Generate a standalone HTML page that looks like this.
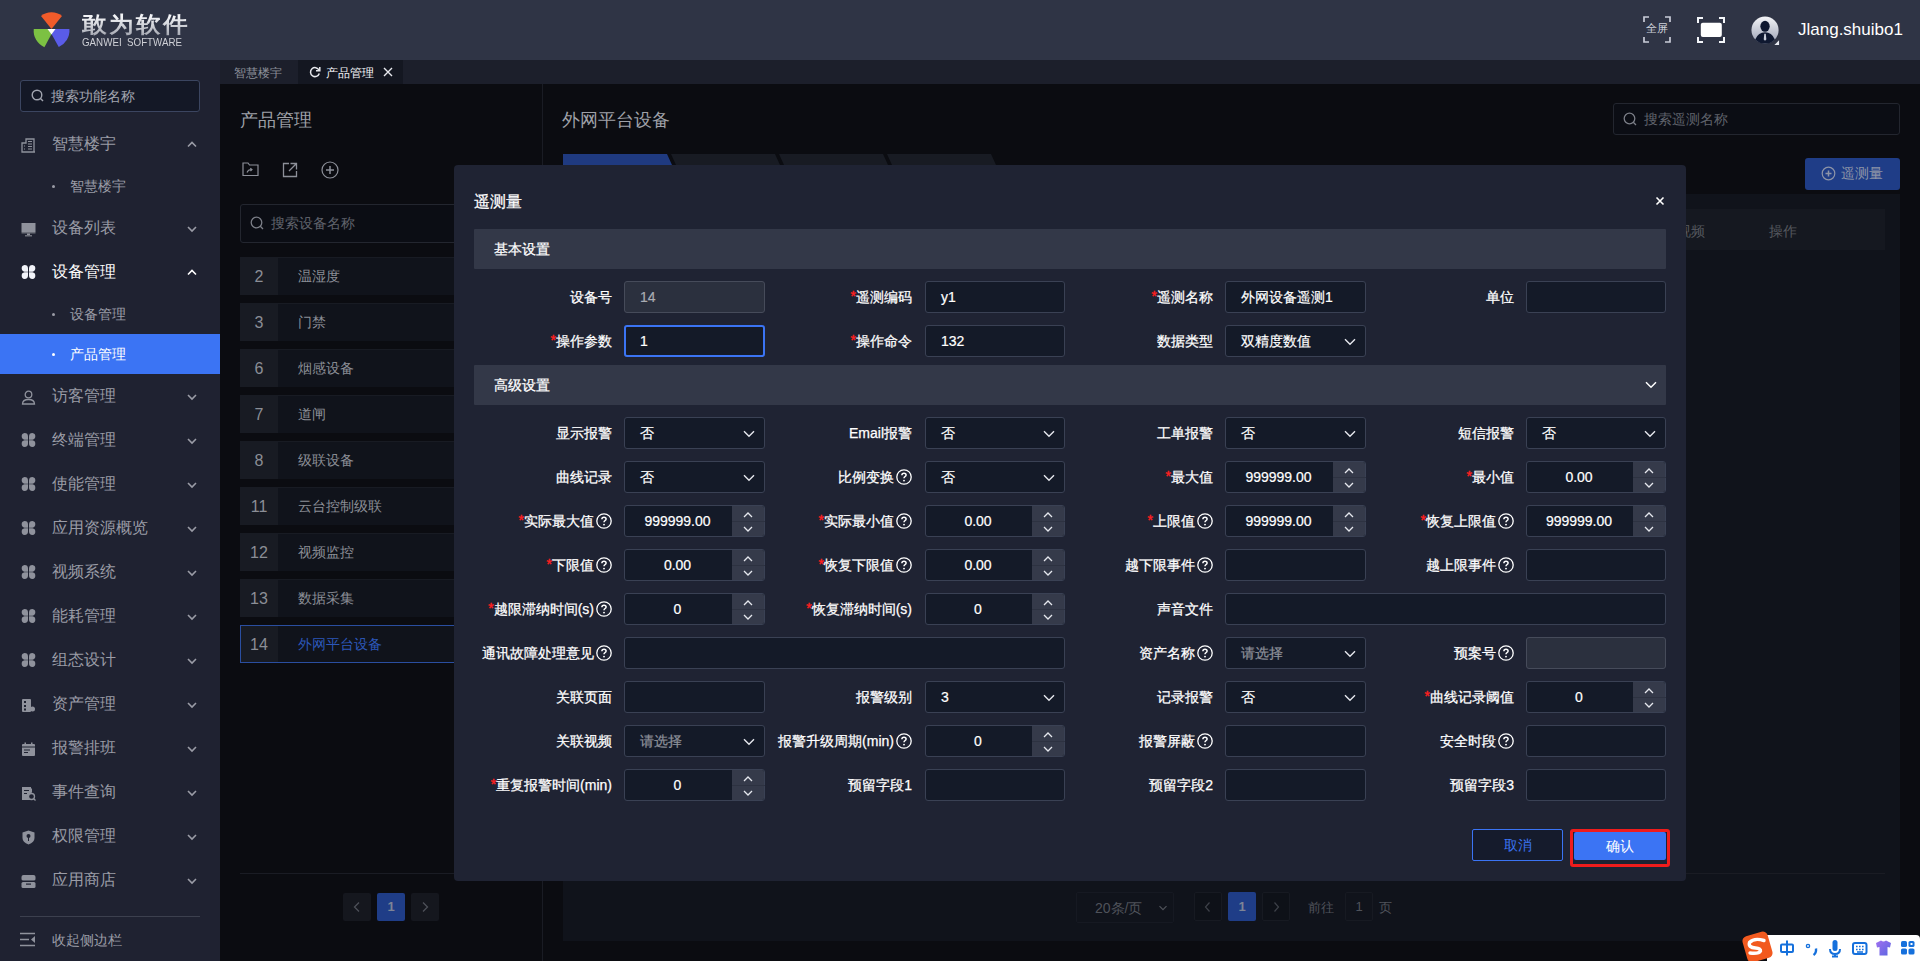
<!DOCTYPE html><html><head><meta charset="utf-8"><style>
*{box-sizing:border-box;margin:0;padding:0}
html,body{width:1920px;height:961px;overflow:hidden;background:#0b0c11;font-family:"Liberation Sans",sans-serif;color:#fff}
.a{position:absolute}
svg{display:block}
#hdr{position:absolute;left:0;top:0;width:1920px;height:60px;background:#2f3445}
#side{position:absolute;left:0;top:60px;width:220px;height:901px;background:#1f2231}
#tabs{position:absolute;left:220px;top:60px;width:1700px;height:24px;background:#1c1f2b}
#content{position:absolute;left:220px;top:84px;width:1700px;height:877px;background:#0b0c11}
.mi{position:absolute;left:0;width:220px;height:44px;color:#9a9ca6;font-size:16px}
.mi .t{position:absolute;left:52px;top:12px;line-height:20px;white-space:nowrap}
.mi .ic{position:absolute;left:21px;top:15px}
.mi .ch{position:absolute;left:187px;top:18px}
.si{position:absolute;left:0;width:220px;height:40px;color:#9a9ca6;font-size:14px}
.si .t{position:absolute;left:70px;top:12px;line-height:16px}
.si .dot{position:absolute;left:52px;top:19px;width:3px;height:3px;border-radius:50%;background:#9a9ca6}

.lb{position:absolute;height:20px;line-height:20px;font-size:14px;color:#fff;white-space:nowrap;text-align:right;-webkit-text-stroke:0.25px #fff}
.lb .st{color:#ff1f1f;position:relative;top:-1px;-webkit-text-stroke:0.4px #ff1f1f}
.qm{display:inline-block;vertical-align:top;margin-top:2px;margin-left:2px;width:16px;height:16px}
.inp{position:absolute;height:32px;border:1px solid #3a4154;border-radius:3px;background:#141a28;font-size:14px;color:#fff;line-height:30px;padding-left:15px;white-space:nowrap;-webkit-text-stroke:0.2px currentColor}
.sp{position:absolute;top:0;right:0;width:32px;height:30px;background:#353a4a;border-radius:0 2px 2px 0}
</style></head><body>
<div id="hdr">
<svg class="a" style="left:0;top:0" width="80" height="60" viewBox="0 0 80 60">
<path d="M51.5 29 L41 16 A16.5 16.5 0 0 1 62 16 Z" fill="#f05b2a"/>
<path d="M48 29 L33.75 29 A18 18 0 0 0 44.4 47.25 L51.5 34 Z" fill="#7cc143"/>
<path d="M55 29 L69.4 29 A18 18 0 0 1 58.75 46.9 L51.5 34 Z" fill="#5a5ce8"/>
<path d="M47.5 29 L55.5 29 L51.5 34.5 Z" fill="#fff"/>
</svg>
<div class="a" style="left:82px;top:12px;font-size:21.5px;font-weight:bold;color:transparent;background:linear-gradient(180deg,#f2f3f6 20%,#a6a9b3 90%);-webkit-background-clip:text;background-clip:text;letter-spacing:2px;line-height:26px;transform:scaleX(1.12);transform-origin:0 0;white-space:nowrap">敢为软件</div>
<div class="a" style="left:82px;top:37px;font-size:10.5px;color:#cfd0d6;letter-spacing:0px;line-height:10px;white-space:nowrap;transform:scaleX(0.93);transform-origin:0 0">GANWEI&nbsp;&nbsp;SOFTWARE</div>
<svg class="a" style="left:1643px;top:16px" width="28" height="27" viewBox="0 0 28 27">
<path d="M1 6 V1 H6 M22 1 H27 V6 M27 21 V26 H22 M6 26 H1 V21" fill="none" stroke="#c9ccd8" stroke-width="1.7"/>
</svg>
<div class="a" style="left:1646px;top:20px;font-size:11px;color:#d0d3dc;line-height:16px">全屏</div>
<svg class="a" style="left:1697px;top:17px" width="28" height="27" viewBox="0 0 28 27">
<path d="M1 6 V1 H6 M22 1 H27 V6 M27 20 V25 H22 M6 25 H1 V20" fill="none" stroke="#f4f6fa" stroke-width="2"/>
<rect x="3.8" y="5.8" width="21" height="14.2" rx="2" fill="#fff"/>
</svg>
<svg class="a" style="left:1751px;top:16px" width="29" height="29" viewBox="0 0 31 31">
<defs><linearGradient id="av" x1="0" y1="0" x2="0" y2="1"><stop offset="0" stop-color="#f4f5f8"/><stop offset="1" stop-color="#9aa0b4"/></linearGradient></defs>
<circle cx="15" cy="15" r="14.5" fill="url(#av)"/>
<ellipse cx="15" cy="11" rx="5" ry="5.8" fill="#0f1830"/>
<path d="M4.5 25 Q8 17.5 15 17.5 Q22 17.5 25.5 25 A14.5 14.5 0 0 1 4.5 25 Z" fill="#0f1830"/>
<path d="M14.2 19 h1.6 l0.6 6 l-1.4 1.4 l-1.4 -1.4z" fill="#c9ceda"/>
<path d="M30 26 L30 31 L25 31 Z" fill="#e8eaf0"/>
</svg>
<div class="a" style="left:1798px;top:20px;font-size:17px;color:#fff;line-height:20px;white-space:nowrap">Jlang.shuibo1</div>
</div>
<div id="side">
<div class="a" style="left:20px;top:20px;width:180px;height:32px;border:1px solid #3b4560;border-radius:3px;background:#141826"></div>
<svg class="a" style="left:31px;top:29px" width="14" height="14" viewBox="0 0 14 14"><circle cx="6" cy="6" r="4.8" fill="none" stroke="#a2a5b0" stroke-width="1.4"/><path d="M9.5 9.5 L12 12" stroke="#a2a5b0" stroke-width="1.4"/></svg>
<div class="a" style="left:51px;top:27px;font-size:14px;color:#a2a5b0;line-height:18px">搜索功能名称</div>
<div class="mi" style="top:62px;color:#9a9ca6"><svg class="ic" style="top:16px" width="15" height="15" viewBox="0 0 15 15"><path d="M1 14 V5 H5 V1 H13 V14 Z M1 14 H14" fill="none" stroke="#8f929c" stroke-width="1.3"/><path d="M7 3.5h4M7 6h4M7 8.5h4M7 11h4M3 8h1M3 11h1" stroke="#8f929c" stroke-width="1.2"/></svg><div class="t">智慧楼宇</div><svg class="ch" width="10" height="10" viewBox="0 0 10 10"><path d="M1 6.5 L5 2.5 L9 6.5" fill="none" stroke="#9a9ca6" stroke-width="1.6"/></svg></div>
<div class="si" style="top:106px"><div class="dot"></div><div class="t">智慧楼宇</div></div>
<div class="mi" style="top:146px;color:#9a9ca6"><svg class="ic" style="top:16px" width="15" height="15" viewBox="0 0 15 15"><rect x="0.5" y="1" width="14" height="9" fill="#8f929c"/><rect x="0.5" y="10" width="14" height="1.5" fill="#6d707a"/><rect x="6" y="11.5" width="3" height="1.5" fill="#8f929c"/><rect x="4" y="13" width="7" height="1.5" fill="#6d707a"/></svg><div class="t">设备列表</div><svg class="ch" width="10" height="10" viewBox="0 0 10 10"><path d="M1 3 L5 7 L9 3" fill="none" stroke="#9a9ca6" stroke-width="1.6"/></svg></div>
<div class="mi" style="top:190px;color:#fff"><svg class="ic" width="15" height="14" viewBox="0 0 15 14"><path d="M7 6.7 H3.5 A3.4 3.4 0 0 1 3.5 0 A3.5 3.4 0 0 1 7 3.4 Z M8 6.7 H11.5 A3.4 3.4 0 0 0 11.5 0 A3.5 3.4 0 0 0 8 3.4 Z M7 7.3 H3.5 A3.4 3.4 0 0 0 3.5 14 A3.5 3.4 0 0 0 7 10.6 Z M8 7.3 H11.5 A3.4 3.4 0 0 1 11.5 14 A3.5 3.4 0 0 1 8 10.6 Z" fill="#f2f4fa"/></svg><div class="t">设备管理</div><svg class="ch" width="10" height="10" viewBox="0 0 10 10"><path d="M1 6.5 L5 2.5 L9 6.5" fill="none" stroke="#fff" stroke-width="1.6"/></svg></div>
<div class="si" style="top:234px"><div class="dot"></div><div class="t">设备管理</div></div>
<div class="si" style="top:274px;background:#3b74f4;color:#fff"><div class="dot" style="background:#fff"></div><div class="t">产品管理</div></div>
<div class="mi" style="top:314px;color:#9a9ca6"><svg class="ic" style="top:16px" width="15" height="15" viewBox="0 0 15 15"><circle cx="7.5" cy="4.5" r="3.3" fill="none" stroke="#8f929c" stroke-width="1.3"/><path d="M1.5 14 Q1.5 9.5 7.5 9.5 Q13.5 9.5 13.5 14 Z" fill="none" stroke="#8f929c" stroke-width="1.3"/></svg><div class="t">访客管理</div><svg class="ch" width="10" height="10" viewBox="0 0 10 10"><path d="M1 3 L5 7 L9 3" fill="none" stroke="#9a9ca6" stroke-width="1.6"/></svg></div>
<div class="mi" style="top:358px;color:#9a9ca6"><svg class="ic" width="15" height="14" viewBox="0 0 15 14"><path d="M7 6.7 H3.5 A3.4 3.4 0 0 1 3.5 0 A3.5 3.4 0 0 1 7 3.4 Z M8 6.7 H11.5 A3.4 3.4 0 0 0 11.5 0 A3.5 3.4 0 0 0 8 3.4 Z M7 7.3 H3.5 A3.4 3.4 0 0 0 3.5 14 A3.5 3.4 0 0 0 7 10.6 Z M8 7.3 H11.5 A3.4 3.4 0 0 1 11.5 14 A3.5 3.4 0 0 1 8 10.6 Z" fill="#8f929c"/></svg><div class="t">终端管理</div><svg class="ch" width="10" height="10" viewBox="0 0 10 10"><path d="M1 3 L5 7 L9 3" fill="none" stroke="#9a9ca6" stroke-width="1.6"/></svg></div>
<div class="mi" style="top:402px;color:#9a9ca6"><svg class="ic" width="15" height="14" viewBox="0 0 15 14"><path d="M7 6.7 H3.5 A3.4 3.4 0 0 1 3.5 0 A3.5 3.4 0 0 1 7 3.4 Z M8 6.7 H11.5 A3.4 3.4 0 0 0 11.5 0 A3.5 3.4 0 0 0 8 3.4 Z M7 7.3 H3.5 A3.4 3.4 0 0 0 3.5 14 A3.5 3.4 0 0 0 7 10.6 Z M8 7.3 H11.5 A3.4 3.4 0 0 1 11.5 14 A3.5 3.4 0 0 1 8 10.6 Z" fill="#8f929c"/></svg><div class="t">使能管理</div><svg class="ch" width="10" height="10" viewBox="0 0 10 10"><path d="M1 3 L5 7 L9 3" fill="none" stroke="#9a9ca6" stroke-width="1.6"/></svg></div>
<div class="mi" style="top:446px;color:#9a9ca6"><svg class="ic" width="15" height="14" viewBox="0 0 15 14"><path d="M7 6.7 H3.5 A3.4 3.4 0 0 1 3.5 0 A3.5 3.4 0 0 1 7 3.4 Z M8 6.7 H11.5 A3.4 3.4 0 0 0 11.5 0 A3.5 3.4 0 0 0 8 3.4 Z M7 7.3 H3.5 A3.4 3.4 0 0 0 3.5 14 A3.5 3.4 0 0 0 7 10.6 Z M8 7.3 H11.5 A3.4 3.4 0 0 1 11.5 14 A3.5 3.4 0 0 1 8 10.6 Z" fill="#8f929c"/></svg><div class="t">应用资源概览</div><svg class="ch" width="10" height="10" viewBox="0 0 10 10"><path d="M1 3 L5 7 L9 3" fill="none" stroke="#9a9ca6" stroke-width="1.6"/></svg></div>
<div class="mi" style="top:490px;color:#9a9ca6"><svg class="ic" width="15" height="14" viewBox="0 0 15 14"><path d="M7 6.7 H3.5 A3.4 3.4 0 0 1 3.5 0 A3.5 3.4 0 0 1 7 3.4 Z M8 6.7 H11.5 A3.4 3.4 0 0 0 11.5 0 A3.5 3.4 0 0 0 8 3.4 Z M7 7.3 H3.5 A3.4 3.4 0 0 0 3.5 14 A3.5 3.4 0 0 0 7 10.6 Z M8 7.3 H11.5 A3.4 3.4 0 0 1 11.5 14 A3.5 3.4 0 0 1 8 10.6 Z" fill="#8f929c"/></svg><div class="t">视频系统</div><svg class="ch" width="10" height="10" viewBox="0 0 10 10"><path d="M1 3 L5 7 L9 3" fill="none" stroke="#9a9ca6" stroke-width="1.6"/></svg></div>
<div class="mi" style="top:534px;color:#9a9ca6"><svg class="ic" width="15" height="14" viewBox="0 0 15 14"><path d="M7 6.7 H3.5 A3.4 3.4 0 0 1 3.5 0 A3.5 3.4 0 0 1 7 3.4 Z M8 6.7 H11.5 A3.4 3.4 0 0 0 11.5 0 A3.5 3.4 0 0 0 8 3.4 Z M7 7.3 H3.5 A3.4 3.4 0 0 0 3.5 14 A3.5 3.4 0 0 0 7 10.6 Z M8 7.3 H11.5 A3.4 3.4 0 0 1 11.5 14 A3.5 3.4 0 0 1 8 10.6 Z" fill="#8f929c"/></svg><div class="t">能耗管理</div><svg class="ch" width="10" height="10" viewBox="0 0 10 10"><path d="M1 3 L5 7 L9 3" fill="none" stroke="#9a9ca6" stroke-width="1.6"/></svg></div>
<div class="mi" style="top:578px;color:#9a9ca6"><svg class="ic" width="15" height="14" viewBox="0 0 15 14"><path d="M7 6.7 H3.5 A3.4 3.4 0 0 1 3.5 0 A3.5 3.4 0 0 1 7 3.4 Z M8 6.7 H11.5 A3.4 3.4 0 0 0 11.5 0 A3.5 3.4 0 0 0 8 3.4 Z M7 7.3 H3.5 A3.4 3.4 0 0 0 3.5 14 A3.5 3.4 0 0 0 7 10.6 Z M8 7.3 H11.5 A3.4 3.4 0 0 1 11.5 14 A3.5 3.4 0 0 1 8 10.6 Z" fill="#8f929c"/></svg><div class="t">组态设计</div><svg class="ch" width="10" height="10" viewBox="0 0 10 10"><path d="M1 3 L5 7 L9 3" fill="none" stroke="#9a9ca6" stroke-width="1.6"/></svg></div>
<div class="mi" style="top:622px;color:#9a9ca6"><svg class="ic" style="top:16px" width="15" height="15" viewBox="0 0 15 15"><rect x="1" y="1" width="9" height="13" rx="1" fill="#8f929c"/><rect x="3" y="3" width="2" height="2" fill="#1f2231"/><rect x="3" y="7" width="2" height="2" fill="#1f2231"/><rect x="3" y="10.5" width="2" height="2" fill="#1f2231"/><circle cx="11.5" cy="11" r="2.5" fill="#8f929c"/></svg><div class="t">资产管理</div><svg class="ch" width="10" height="10" viewBox="0 0 10 10"><path d="M1 3 L5 7 L9 3" fill="none" stroke="#9a9ca6" stroke-width="1.6"/></svg></div>
<div class="mi" style="top:666px;color:#9a9ca6"><svg class="ic" style="top:16px" width="15" height="15" viewBox="0 0 15 15"><rect x="1" y="2" width="13" height="12" rx="1" fill="#8f929c"/><rect x="3.5" y="0.5" width="1.5" height="3" fill="#8f929c"/><rect x="10" y="0.5" width="1.5" height="3" fill="#8f929c"/><rect x="1" y="4.5" width="13" height="1" fill="#1f2231"/><rect x="3" y="7.5" width="6" height="1" fill="#1f2231"/><rect x="3" y="10" width="4" height="1" fill="#1f2231"/></svg><div class="t">报警排班</div><svg class="ch" width="10" height="10" viewBox="0 0 10 10"><path d="M1 3 L5 7 L9 3" fill="none" stroke="#9a9ca6" stroke-width="1.6"/></svg></div>
<div class="mi" style="top:710px;color:#9a9ca6"><svg class="ic" style="top:16px" width="15" height="15" viewBox="0 0 15 15"><path d="M1 1 H9 L11 3 V7 M8 14 H1 Z" fill="#8f929c"/><rect x="1" y="1" width="9" height="13" fill="#8f929c"/><rect x="3" y="4" width="5" height="1" fill="#1f2231"/><rect x="3" y="7" width="3" height="1" fill="#1f2231"/><circle cx="10.5" cy="10.5" r="3" fill="#1f2231" stroke="#8f929c" stroke-width="1.3"/><path d="M12.5 12.5 L14.5 14.5" stroke="#8f929c" stroke-width="1.3"/></svg><div class="t">事件查询</div><svg class="ch" width="10" height="10" viewBox="0 0 10 10"><path d="M1 3 L5 7 L9 3" fill="none" stroke="#9a9ca6" stroke-width="1.6"/></svg></div>
<div class="mi" style="top:754px;color:#9a9ca6"><svg class="ic" style="top:16px" width="15" height="15" viewBox="0 0 15 15"><path d="M7.5 0.5 L13.5 2.5 V8 Q13.5 12 7.5 14.5 Q1.5 12 1.5 8 V2.5 Z" fill="#8f929c"/><circle cx="7.5" cy="6" r="2" fill="#1f2231"/><rect x="7" y="7" width="1" height="4" fill="#1f2231"/></svg><div class="t">权限管理</div><svg class="ch" width="10" height="10" viewBox="0 0 10 10"><path d="M1 3 L5 7 L9 3" fill="none" stroke="#9a9ca6" stroke-width="1.6"/></svg></div>
<div class="mi" style="top:798px;color:#9a9ca6"><svg class="ic" style="top:16px" width="15" height="15" viewBox="0 0 15 15"><rect x="0.5" y="1" width="14" height="6" rx="2" fill="#8f929c"/><rect x="0.5" y="8" width="14" height="6" rx="1.5" fill="#8f929c"/><rect x="0.5" y="6.5" width="14" height="1.3" fill="#1f2231"/><rect x="5" y="9.5" width="5" height="1.2" fill="#1f2231"/></svg><div class="t">应用商店</div><svg class="ch" width="10" height="10" viewBox="0 0 10 10"><path d="M1 3 L5 7 L9 3" fill="none" stroke="#9a9ca6" stroke-width="1.6"/></svg></div>
<div class="a" style="left:20px;top:856px;width:180px;height:1px;background:#3c404e"></div>
<svg class="a" style="left:20px;top:872px" width="16" height="15" viewBox="0 0 16 15"><path d="M0 1.5h15M0 7.5h9M0 13.5h15" stroke="#8f929c" stroke-width="1.5"/><path d="M15 4 L11 7.5 L15 11 Z" fill="#8f929c"/></svg>
<div class="a" style="left:52px;top:871px;font-size:14px;color:#9a9ca6;line-height:18px">收起侧边栏</div>
</div>
<div id="tabs">
<div class="a" style="left:0;top:0;width:78px;height:24px;background:#1c1f2b"></div>
<div class="a" style="left:14px;top:5px;font-size:12px;color:#8d909a;line-height:16px">智慧楼宇</div>
<div class="a" style="left:78px;top:0;width:105px;height:24px;background:#141721"></div>
<svg class="a" style="left:89px;top:6px" width="12" height="12" viewBox="0 0 12 12"><path d="M10 4 A4.5 4.5 0 1 0 10.3 7.5" fill="none" stroke="#e8e9ee" stroke-width="1.5"/><path d="M10.8 1 V4.8 H7" fill="none" stroke="#e8e9ee" stroke-width="1.5"/></svg>
<div class="a" style="left:106px;top:5px;font-size:12px;color:#f2f3f6;line-height:16px">产品管理</div>
<svg class="a" style="left:163px;top:7px" width="10" height="10" viewBox="0 0 10 10"><path d="M1 1L9 9M9 1L1 9" stroke="#e8e9ee" stroke-width="1.4"/></svg>
</div>
<div id="content">
<div class="a" style="left:20px;top:25px;font-size:18px;color:#9fa1a8;line-height:22px">产品管理</div>
<svg class="a" style="left:22px;top:77px" width="17" height="16" viewBox="0 0 17 16"><path d="M1 2 H6 L7.5 4 H16 V14.5 H1 Z" fill="none" stroke="#8d9099" stroke-width="1.2"/><path d="M5 11.5 Q6 8.5 9.5 8.5 M8.3 7.2 L10 8.5 L8.5 10" fill="none" stroke="#8d9099" stroke-width="1.1"/></svg>
<svg class="a" style="left:62px;top:78px" width="16" height="16" viewBox="0 0 16 16"><path d="M7 1.5 H1.5 V14.5 H14.5 V9" fill="none" stroke="#8d9099" stroke-width="1.3"/><path d="M8.5 1.5 H14.5 V7.5 M14.5 1.5 L7 9" fill="none" stroke="#8d9099" stroke-width="1.3"/></svg>
<svg class="a" style="left:101px;top:77px" width="18" height="18" viewBox="0 0 18 18"><circle cx="9" cy="9" r="8" fill="none" stroke="#8d9099" stroke-width="1.2"/><path d="M9 5v8M5 9h8" stroke="#8d9099" stroke-width="1.5"/></svg>
<div class="a" style="left:20px;top:120px;width:320px;height:39px;border:1px solid #23262f;border-radius:3px;background:#0b0d14"></div>
<svg class="a" style="left:30px;top:132px" width="15" height="15" viewBox="0 0 15 15"><circle cx="6.5" cy="6.5" r="5.3" fill="none" stroke="#7b7e87" stroke-width="1.3"/><path d="M10.3 10.3 L13 13" stroke="#7b7e87" stroke-width="1.3"/></svg>
<div class="a" style="left:51px;top:130px;font-size:14px;color:#5f626b;line-height:18px">搜索设备名称</div>
<div class="a" style="left:20px;top:173px;width:320px;height:38px;background:#10131b;border:none;border-top:1px solid #181b23"></div>
<div class="a" style="left:20px;top:174px;width:38px;height:37px;background:#181b23"></div>
<div class="a" style="left:20px;top:183px;width:38px;text-align:center;font-size:16px;color:#8b8e96;line-height:20px">2</div>
<div class="a" style="left:78px;top:183px;font-size:14px;color:#8b8e96;line-height:18px">温湿度</div>
<div class="a" style="left:20px;top:219px;width:320px;height:38px;background:#10131b;border:none;border-top:1px solid #181b23"></div>
<div class="a" style="left:20px;top:220px;width:38px;height:37px;background:#181b23"></div>
<div class="a" style="left:20px;top:229px;width:38px;text-align:center;font-size:16px;color:#8b8e96;line-height:20px">3</div>
<div class="a" style="left:78px;top:229px;font-size:14px;color:#8b8e96;line-height:18px">门禁</div>
<div class="a" style="left:20px;top:265px;width:320px;height:38px;background:#10131b;border:none;border-top:1px solid #181b23"></div>
<div class="a" style="left:20px;top:266px;width:38px;height:37px;background:#181b23"></div>
<div class="a" style="left:20px;top:275px;width:38px;text-align:center;font-size:16px;color:#8b8e96;line-height:20px">6</div>
<div class="a" style="left:78px;top:275px;font-size:14px;color:#8b8e96;line-height:18px">烟感设备</div>
<div class="a" style="left:20px;top:311px;width:320px;height:38px;background:#10131b;border:none;border-top:1px solid #181b23"></div>
<div class="a" style="left:20px;top:312px;width:38px;height:37px;background:#181b23"></div>
<div class="a" style="left:20px;top:321px;width:38px;text-align:center;font-size:16px;color:#8b8e96;line-height:20px">7</div>
<div class="a" style="left:78px;top:321px;font-size:14px;color:#8b8e96;line-height:18px">道闸</div>
<div class="a" style="left:20px;top:357px;width:320px;height:38px;background:#10131b;border:none;border-top:1px solid #181b23"></div>
<div class="a" style="left:20px;top:358px;width:38px;height:37px;background:#181b23"></div>
<div class="a" style="left:20px;top:367px;width:38px;text-align:center;font-size:16px;color:#8b8e96;line-height:20px">8</div>
<div class="a" style="left:78px;top:367px;font-size:14px;color:#8b8e96;line-height:18px">级联设备</div>
<div class="a" style="left:20px;top:403px;width:320px;height:38px;background:#10131b;border:none;border-top:1px solid #181b23"></div>
<div class="a" style="left:20px;top:404px;width:38px;height:37px;background:#181b23"></div>
<div class="a" style="left:20px;top:413px;width:38px;text-align:center;font-size:16px;color:#8b8e96;line-height:20px">11</div>
<div class="a" style="left:78px;top:413px;font-size:14px;color:#8b8e96;line-height:18px">云台控制级联</div>
<div class="a" style="left:20px;top:449px;width:320px;height:38px;background:#10131b;border:none;border-top:1px solid #181b23"></div>
<div class="a" style="left:20px;top:450px;width:38px;height:37px;background:#181b23"></div>
<div class="a" style="left:20px;top:459px;width:38px;text-align:center;font-size:16px;color:#8b8e96;line-height:20px">12</div>
<div class="a" style="left:78px;top:459px;font-size:14px;color:#8b8e96;line-height:18px">视频监控</div>
<div class="a" style="left:20px;top:495px;width:320px;height:38px;background:#10131b;border:none;border-top:1px solid #181b23"></div>
<div class="a" style="left:20px;top:496px;width:38px;height:37px;background:#181b23"></div>
<div class="a" style="left:20px;top:505px;width:38px;text-align:center;font-size:16px;color:#8b8e96;line-height:20px">13</div>
<div class="a" style="left:78px;top:505px;font-size:14px;color:#8b8e96;line-height:18px">数据采集</div>
<div class="a" style="left:20px;top:541px;width:320px;height:38px;background:#10131b;border:1px solid #2a4ea0;border-top:1px solid #2a4ea0"></div>
<div class="a" style="left:21px;top:542px;width:37px;height:36px;background:#181b23"></div>
<div class="a" style="left:20px;top:551px;width:38px;text-align:center;font-size:16px;color:#8b8e96;line-height:20px">14</div>
<div class="a" style="left:78px;top:551px;font-size:14px;color:#2c57b8;line-height:18px">外网平台设备</div>
<div class="a" style="left:20px;top:789px;width:300px;height:1px;background:#1a1c24"></div>
<div class="a" style="left:123px;top:809px;width:28px;height:28px;background:#15171e;border-radius:2px"></div>
<svg class="a" style="left:131px;top:817px" width="12" height="12" viewBox="0 0 12 12"><path d="M8 1.5 L3.5 6 L8 10.5" fill="none" stroke="#4d5058" stroke-width="1.3"/></svg>
<div class="a" style="left:157px;top:809px;width:28px;height:28px;background:#1f3d87;border-radius:2px;text-align:center;font-size:13px;font-weight:bold;color:#7d8496;line-height:28px">1</div>
<div class="a" style="left:191px;top:809px;width:28px;height:28px;background:#15171e;border-radius:2px"></div>
<svg class="a" style="left:199px;top:817px" width="12" height="12" viewBox="0 0 12 12"><path d="M4 1.5 L8.5 6 L4 10.5" fill="none" stroke="#4d5058" stroke-width="1.3"/></svg>
<div class="a" style="left:322px;top:0;width:1px;height:877px;background:#1a1c24"></div>
<div class="a" style="left:342px;top:25px;font-size:18px;color:#9fa1a8;line-height:22px">外网平台设备</div>
<div class="a" style="left:1393px;top:19px;width:287px;height:32px;border:1px solid #23262f;border-radius:3px;background:#0b0d14"></div>
<svg class="a" style="left:1403px;top:28px" width="15" height="15" viewBox="0 0 15 15"><circle cx="6.5" cy="6.5" r="5.3" fill="none" stroke="#7b7e87" stroke-width="1.3"/><path d="M10.3 10.3 L13 13" stroke="#7b7e87" stroke-width="1.3"/></svg>
<div class="a" style="left:1424px;top:26px;font-size:14px;color:#5f626b;line-height:18px">搜索遥测名称</div>
<svg class="a" style="left:342px;top:70px" width="450" height="12" viewBox="0 0 450 12">
<path d="M1 0 H105 L110 11 H1 Z" fill="#1f3a80"/>
<path d="M109 0 H213 L218 11 H114 Z" fill="#181b23"/>
<path d="M217 0 H321 L326 11 H222 Z" fill="#181b23"/>
<path d="M325 0 H429 L434 11 H330 Z" fill="#181b23"/>
</svg>
<div class="a" style="left:1585px;top:74px;width:95px;height:32px;background:#1f3d87;border-radius:3px"></div>
<svg class="a" style="left:1601px;top:82px" width="15" height="15" viewBox="0 0 15 15"><circle cx="7.5" cy="7.5" r="6.3" fill="none" stroke="#8e95a8" stroke-width="1.2"/><path d="M7.5 4.5v6M4.5 7.5h6" stroke="#8e95a8" stroke-width="1.5"/></svg>
<div class="a" style="left:1621px;top:80px;font-size:14px;color:#8e95a8;line-height:18px">遥测量</div>
<div class="a" style="left:343px;top:110px;width:1337px;height:747px;background:#10131b"></div>
<div class="a" style="left:358px;top:125px;width:1307px;height:41px;background:#151820"></div>
<div class="a" style="left:1457px;top:138px;font-size:14px;color:#55585f;line-height:18px">视频</div>
<div class="a" style="left:1549px;top:138px;font-size:14px;color:#55585f;line-height:18px">操作</div>
<div class="a" style="left:343px;top:789px;width:1322px;height:1px;background:#1a1c24"></div>
<div class="a" style="left:856px;top:808px;width:98px;height:31px;border:1px solid #161922;border-radius:2px;background:#10131b"></div>
<div class="a" style="left:875px;top:815px;font-size:14px;color:#4f525a;line-height:18px">20条/页</div>
<svg class="a" style="left:938px;top:819px" width="10" height="10" viewBox="0 0 10 10"><path d="M1.5 3.2 L5 6.7 L8.5 3.2" fill="none" stroke="#4f525a" stroke-width="1.2"/></svg>
<div class="a" style="left:974px;top:808px;width:28px;height:29px;background:#0e1118;border:1px solid #171a22;border-radius:2px"></div>
<svg class="a" style="left:982px;top:817px" width="12" height="12" viewBox="0 0 12 12"><path d="M7.5 1.5 L3.5 6 L7.5 10.5" fill="none" stroke="#3e4149" stroke-width="1.2"/></svg>
<div class="a" style="left:1008px;top:808px;width:28px;height:29px;background:#1f3d87;border-radius:2px;text-align:center;font-size:13px;font-weight:bold;color:#7d8496;line-height:29px">1</div>
<div class="a" style="left:1042px;top:808px;width:28px;height:29px;background:#0e1118;border:1px solid #171a22;border-radius:2px"></div>
<svg class="a" style="left:1050px;top:817px" width="12" height="12" viewBox="0 0 12 12"><path d="M4.5 1.5 L8.5 6 L4.5 10.5" fill="none" stroke="#3e4149" stroke-width="1.2"/></svg>
<div class="a" style="left:1088px;top:815px;font-size:13px;color:#4f525a;line-height:18px">前往</div>
<div class="a" style="left:1125px;top:808px;width:28px;height:29px;border:1px solid #171a22;border-radius:2px;text-align:center;font-size:13px;color:#4f525a;line-height:27px">1</div>
<div class="a" style="left:1159px;top:815px;font-size:13px;color:#4f525a;line-height:18px">页</div>
</div>
<div class="a" style="left:454px;top:165px;width:1232px;height:716px;background:#1f2333;border-radius:4px"></div>
<div class="a" style="left:474px;top:192px;font-size:16px;color:#fff;line-height:20px;-webkit-text-stroke:0.25px #fff">遥测量</div>
<svg class="a" style="left:1655px;top:196px" width="10" height="10" viewBox="0 0 10 10"><path d="M1.5 1.5L8.5 8.5M8.5 1.5L1.5 8.5" stroke="#fff" stroke-width="1.6"/></svg>
<div class="a" style="left:474px;top:229px;width:1192px;height:40px;background:#333848;border-radius:1px"></div>
<div class="a" style="left:494px;top:239px;font-size:14px;color:#fff;line-height:20px;-webkit-text-stroke:0.25px #fff">基本设置</div>
<div class="a" style="left:474px;top:365px;width:1192px;height:40px;background:#333848;border-radius:1px"></div>
<div class="a" style="left:494px;top:375px;font-size:14px;color:#fff;line-height:20px;-webkit-text-stroke:0.25px #fff">高级设置</div>
<svg class="a" style="left:1645px;top:381px" width="12" height="8" viewBox="0 0 12 8"><path d="M1 1.2 L6 6.2 L11 1.2" fill="none" stroke="#fff" stroke-width="1.5"/></svg>
<div class="lb" style="right:1308px;top:287px">设备号</div>
<div class="inp" style="left:624px;top:281px;width:141px;background:#2b303e;border-color:#464b5a;color:#a9acb4">14</div>
<div class="lb" style="right:1008px;top:287px"><span class="st">*</span>遥测编码</div>
<div class="inp" style="left:925px;top:281px;width:140px">y1</div>
<div class="lb" style="right:707px;top:287px"><span class="st">*</span>遥测名称</div>
<div class="inp" style="left:1225px;top:281px;width:141px">外网设备遥测1</div>
<div class="lb" style="right:406px;top:287px">单位</div>
<div class="inp" style="left:1526px;top:281px;width:140px"></div>
<div class="lb" style="right:1308px;top:331px"><span class="st">*</span>操作参数</div>
<div class="inp" style="left:624px;top:325px;width:141px;border:2px solid #3b74f4;padding-left:14px;line-height:28px">1</div>
<div class="lb" style="right:1008px;top:331px"><span class="st">*</span>操作命令</div>
<div class="inp" style="left:925px;top:325px;width:140px">132</div>
<div class="lb" style="right:707px;top:331px">数据类型</div>
<div class="inp" style="left:1225px;top:325px;width:141px;color:#fff">双精度数值</div>
<svg class="a" style="left:1344px;top:338px" width="12" height="8" viewBox="0 0 12 8"><path d="M1 1.2 L6 6.2 L11 1.2" fill="none" stroke="#e6e8ee" stroke-width="1.4"/></svg>
<div class="lb" style="right:1308px;top:423px">显示报警</div>
<div class="inp" style="left:624px;top:417px;width:141px;color:#fff">否</div>
<svg class="a" style="left:743px;top:430px" width="12" height="8" viewBox="0 0 12 8"><path d="M1 1.2 L6 6.2 L11 1.2" fill="none" stroke="#e6e8ee" stroke-width="1.4"/></svg>
<div class="lb" style="right:1008px;top:423px">Email报警</div>
<div class="inp" style="left:925px;top:417px;width:140px;color:#fff">否</div>
<svg class="a" style="left:1043px;top:430px" width="12" height="8" viewBox="0 0 12 8"><path d="M1 1.2 L6 6.2 L11 1.2" fill="none" stroke="#e6e8ee" stroke-width="1.4"/></svg>
<div class="lb" style="right:707px;top:423px">工单报警</div>
<div class="inp" style="left:1225px;top:417px;width:141px;color:#fff">否</div>
<svg class="a" style="left:1344px;top:430px" width="12" height="8" viewBox="0 0 12 8"><path d="M1 1.2 L6 6.2 L11 1.2" fill="none" stroke="#e6e8ee" stroke-width="1.4"/></svg>
<div class="lb" style="right:406px;top:423px">短信报警</div>
<div class="inp" style="left:1526px;top:417px;width:140px;color:#fff">否</div>
<svg class="a" style="left:1644px;top:430px" width="12" height="8" viewBox="0 0 12 8"><path d="M1 1.2 L6 6.2 L11 1.2" fill="none" stroke="#e6e8ee" stroke-width="1.4"/></svg>
<div class="lb" style="right:1308px;top:467px">曲线记录</div>
<div class="inp" style="left:624px;top:461px;width:141px;color:#fff">否</div>
<svg class="a" style="left:743px;top:474px" width="12" height="8" viewBox="0 0 12 8"><path d="M1 1.2 L6 6.2 L11 1.2" fill="none" stroke="#e6e8ee" stroke-width="1.4"/></svg>
<div class="lb" style="right:1008px;top:467px">比例变换<svg class="qm" viewBox="0 0 16 16"><circle cx="8" cy="8" r="7.2" fill="none" stroke="#fff" stroke-width="1.3"/><path d="M5.9 6.2 Q5.9 4.2 8 4.2 Q10.1 4.2 10.1 6 Q10.1 7.1 9 7.6 Q8 8.1 8 9.3" fill="none" stroke="#fff" stroke-width="1.5"/><circle cx="8" cy="11.6" r="0.95" fill="#fff"/></svg></div>
<div class="inp" style="left:925px;top:461px;width:140px;color:#fff">否</div>
<svg class="a" style="left:1043px;top:474px" width="12" height="8" viewBox="0 0 12 8"><path d="M1 1.2 L6 6.2 L11 1.2" fill="none" stroke="#e6e8ee" stroke-width="1.4"/></svg>
<div class="lb" style="right:707px;top:467px"><span class="st">*</span>最大值</div>
<div class="inp" style="left:1225px;top:461px;width:141px;padding-left:0"><div class="a" style="left:0;top:0;width:105px;text-align:center">999999.00</div><div class="sp"><div class="a" style="left:0;top:15px;width:33px;height:1px;background:#2d3241"></div><svg class="a" style="left:10.5px;top:6px" width="10" height="6" viewBox="0 0 10 6"><path d="M1 5 L5 1 L9 5" fill="none" stroke="#e6e8ee" stroke-width="1.3"/></svg><svg class="a" style="left:10.5px;top:20px" width="10" height="6" viewBox="0 0 10 6"><path d="M1 1 L5 5 L9 1" fill="none" stroke="#e6e8ee" stroke-width="1.3"/></svg></div></div>
<div class="lb" style="right:406px;top:467px"><span class="st">*</span>最小值</div>
<div class="inp" style="left:1526px;top:461px;width:140px;padding-left:0"><div class="a" style="left:0;top:0;width:104px;text-align:center">0.00</div><div class="sp"><div class="a" style="left:0;top:15px;width:33px;height:1px;background:#2d3241"></div><svg class="a" style="left:10.5px;top:6px" width="10" height="6" viewBox="0 0 10 6"><path d="M1 5 L5 1 L9 5" fill="none" stroke="#e6e8ee" stroke-width="1.3"/></svg><svg class="a" style="left:10.5px;top:20px" width="10" height="6" viewBox="0 0 10 6"><path d="M1 1 L5 5 L9 1" fill="none" stroke="#e6e8ee" stroke-width="1.3"/></svg></div></div>
<div class="lb" style="right:1308px;top:511px"><span class="st">*</span>实际最大值<svg class="qm" viewBox="0 0 16 16"><circle cx="8" cy="8" r="7.2" fill="none" stroke="#fff" stroke-width="1.3"/><path d="M5.9 6.2 Q5.9 4.2 8 4.2 Q10.1 4.2 10.1 6 Q10.1 7.1 9 7.6 Q8 8.1 8 9.3" fill="none" stroke="#fff" stroke-width="1.5"/><circle cx="8" cy="11.6" r="0.95" fill="#fff"/></svg></div>
<div class="inp" style="left:624px;top:505px;width:141px;padding-left:0"><div class="a" style="left:0;top:0;width:105px;text-align:center">999999.00</div><div class="sp"><div class="a" style="left:0;top:15px;width:33px;height:1px;background:#2d3241"></div><svg class="a" style="left:10.5px;top:6px" width="10" height="6" viewBox="0 0 10 6"><path d="M1 5 L5 1 L9 5" fill="none" stroke="#e6e8ee" stroke-width="1.3"/></svg><svg class="a" style="left:10.5px;top:20px" width="10" height="6" viewBox="0 0 10 6"><path d="M1 1 L5 5 L9 1" fill="none" stroke="#e6e8ee" stroke-width="1.3"/></svg></div></div>
<div class="lb" style="right:1008px;top:511px"><span class="st">*</span>实际最小值<svg class="qm" viewBox="0 0 16 16"><circle cx="8" cy="8" r="7.2" fill="none" stroke="#fff" stroke-width="1.3"/><path d="M5.9 6.2 Q5.9 4.2 8 4.2 Q10.1 4.2 10.1 6 Q10.1 7.1 9 7.6 Q8 8.1 8 9.3" fill="none" stroke="#fff" stroke-width="1.5"/><circle cx="8" cy="11.6" r="0.95" fill="#fff"/></svg></div>
<div class="inp" style="left:925px;top:505px;width:140px;padding-left:0"><div class="a" style="left:0;top:0;width:104px;text-align:center">0.00</div><div class="sp"><div class="a" style="left:0;top:15px;width:33px;height:1px;background:#2d3241"></div><svg class="a" style="left:10.5px;top:6px" width="10" height="6" viewBox="0 0 10 6"><path d="M1 5 L5 1 L9 5" fill="none" stroke="#e6e8ee" stroke-width="1.3"/></svg><svg class="a" style="left:10.5px;top:20px" width="10" height="6" viewBox="0 0 10 6"><path d="M1 1 L5 5 L9 1" fill="none" stroke="#e6e8ee" stroke-width="1.3"/></svg></div></div>
<div class="lb" style="right:707px;top:511px"><span class="st">*</span>上限值<svg class="qm" viewBox="0 0 16 16"><circle cx="8" cy="8" r="7.2" fill="none" stroke="#fff" stroke-width="1.3"/><path d="M5.9 6.2 Q5.9 4.2 8 4.2 Q10.1 4.2 10.1 6 Q10.1 7.1 9 7.6 Q8 8.1 8 9.3" fill="none" stroke="#fff" stroke-width="1.5"/><circle cx="8" cy="11.6" r="0.95" fill="#fff"/></svg></div>
<div class="inp" style="left:1225px;top:505px;width:141px;padding-left:0"><div class="a" style="left:0;top:0;width:105px;text-align:center">999999.00</div><div class="sp"><div class="a" style="left:0;top:15px;width:33px;height:1px;background:#2d3241"></div><svg class="a" style="left:10.5px;top:6px" width="10" height="6" viewBox="0 0 10 6"><path d="M1 5 L5 1 L9 5" fill="none" stroke="#e6e8ee" stroke-width="1.3"/></svg><svg class="a" style="left:10.5px;top:20px" width="10" height="6" viewBox="0 0 10 6"><path d="M1 1 L5 5 L9 1" fill="none" stroke="#e6e8ee" stroke-width="1.3"/></svg></div></div>
<div class="lb" style="right:406px;top:511px"><span class="st">*</span>恢复上限值<svg class="qm" viewBox="0 0 16 16"><circle cx="8" cy="8" r="7.2" fill="none" stroke="#fff" stroke-width="1.3"/><path d="M5.9 6.2 Q5.9 4.2 8 4.2 Q10.1 4.2 10.1 6 Q10.1 7.1 9 7.6 Q8 8.1 8 9.3" fill="none" stroke="#fff" stroke-width="1.5"/><circle cx="8" cy="11.6" r="0.95" fill="#fff"/></svg></div>
<div class="inp" style="left:1526px;top:505px;width:140px;padding-left:0"><div class="a" style="left:0;top:0;width:104px;text-align:center">999999.00</div><div class="sp"><div class="a" style="left:0;top:15px;width:33px;height:1px;background:#2d3241"></div><svg class="a" style="left:10.5px;top:6px" width="10" height="6" viewBox="0 0 10 6"><path d="M1 5 L5 1 L9 5" fill="none" stroke="#e6e8ee" stroke-width="1.3"/></svg><svg class="a" style="left:10.5px;top:20px" width="10" height="6" viewBox="0 0 10 6"><path d="M1 1 L5 5 L9 1" fill="none" stroke="#e6e8ee" stroke-width="1.3"/></svg></div></div>
<div class="lb" style="right:1308px;top:555px"><span class="st">*</span>下限值<svg class="qm" viewBox="0 0 16 16"><circle cx="8" cy="8" r="7.2" fill="none" stroke="#fff" stroke-width="1.3"/><path d="M5.9 6.2 Q5.9 4.2 8 4.2 Q10.1 4.2 10.1 6 Q10.1 7.1 9 7.6 Q8 8.1 8 9.3" fill="none" stroke="#fff" stroke-width="1.5"/><circle cx="8" cy="11.6" r="0.95" fill="#fff"/></svg></div>
<div class="inp" style="left:624px;top:549px;width:141px;padding-left:0"><div class="a" style="left:0;top:0;width:105px;text-align:center">0.00</div><div class="sp"><div class="a" style="left:0;top:15px;width:33px;height:1px;background:#2d3241"></div><svg class="a" style="left:10.5px;top:6px" width="10" height="6" viewBox="0 0 10 6"><path d="M1 5 L5 1 L9 5" fill="none" stroke="#e6e8ee" stroke-width="1.3"/></svg><svg class="a" style="left:10.5px;top:20px" width="10" height="6" viewBox="0 0 10 6"><path d="M1 1 L5 5 L9 1" fill="none" stroke="#e6e8ee" stroke-width="1.3"/></svg></div></div>
<div class="lb" style="right:1008px;top:555px"><span class="st">*</span>恢复下限值<svg class="qm" viewBox="0 0 16 16"><circle cx="8" cy="8" r="7.2" fill="none" stroke="#fff" stroke-width="1.3"/><path d="M5.9 6.2 Q5.9 4.2 8 4.2 Q10.1 4.2 10.1 6 Q10.1 7.1 9 7.6 Q8 8.1 8 9.3" fill="none" stroke="#fff" stroke-width="1.5"/><circle cx="8" cy="11.6" r="0.95" fill="#fff"/></svg></div>
<div class="inp" style="left:925px;top:549px;width:140px;padding-left:0"><div class="a" style="left:0;top:0;width:104px;text-align:center">0.00</div><div class="sp"><div class="a" style="left:0;top:15px;width:33px;height:1px;background:#2d3241"></div><svg class="a" style="left:10.5px;top:6px" width="10" height="6" viewBox="0 0 10 6"><path d="M1 5 L5 1 L9 5" fill="none" stroke="#e6e8ee" stroke-width="1.3"/></svg><svg class="a" style="left:10.5px;top:20px" width="10" height="6" viewBox="0 0 10 6"><path d="M1 1 L5 5 L9 1" fill="none" stroke="#e6e8ee" stroke-width="1.3"/></svg></div></div>
<div class="lb" style="right:707px;top:555px">越下限事件<svg class="qm" viewBox="0 0 16 16"><circle cx="8" cy="8" r="7.2" fill="none" stroke="#fff" stroke-width="1.3"/><path d="M5.9 6.2 Q5.9 4.2 8 4.2 Q10.1 4.2 10.1 6 Q10.1 7.1 9 7.6 Q8 8.1 8 9.3" fill="none" stroke="#fff" stroke-width="1.5"/><circle cx="8" cy="11.6" r="0.95" fill="#fff"/></svg></div>
<div class="inp" style="left:1225px;top:549px;width:141px"></div>
<div class="lb" style="right:406px;top:555px">越上限事件<svg class="qm" viewBox="0 0 16 16"><circle cx="8" cy="8" r="7.2" fill="none" stroke="#fff" stroke-width="1.3"/><path d="M5.9 6.2 Q5.9 4.2 8 4.2 Q10.1 4.2 10.1 6 Q10.1 7.1 9 7.6 Q8 8.1 8 9.3" fill="none" stroke="#fff" stroke-width="1.5"/><circle cx="8" cy="11.6" r="0.95" fill="#fff"/></svg></div>
<div class="inp" style="left:1526px;top:549px;width:140px"></div>
<div class="lb" style="right:1308px;top:599px"><span class="st">*</span>越限滞纳时间(s)<svg class="qm" viewBox="0 0 16 16"><circle cx="8" cy="8" r="7.2" fill="none" stroke="#fff" stroke-width="1.3"/><path d="M5.9 6.2 Q5.9 4.2 8 4.2 Q10.1 4.2 10.1 6 Q10.1 7.1 9 7.6 Q8 8.1 8 9.3" fill="none" stroke="#fff" stroke-width="1.5"/><circle cx="8" cy="11.6" r="0.95" fill="#fff"/></svg></div>
<div class="inp" style="left:624px;top:593px;width:141px;padding-left:0"><div class="a" style="left:0;top:0;width:105px;text-align:center">0</div><div class="sp"><div class="a" style="left:0;top:15px;width:33px;height:1px;background:#2d3241"></div><svg class="a" style="left:10.5px;top:6px" width="10" height="6" viewBox="0 0 10 6"><path d="M1 5 L5 1 L9 5" fill="none" stroke="#e6e8ee" stroke-width="1.3"/></svg><svg class="a" style="left:10.5px;top:20px" width="10" height="6" viewBox="0 0 10 6"><path d="M1 1 L5 5 L9 1" fill="none" stroke="#e6e8ee" stroke-width="1.3"/></svg></div></div>
<div class="lb" style="right:1008px;top:599px"><span class="st">*</span>恢复滞纳时间(s)</div>
<div class="inp" style="left:925px;top:593px;width:140px;padding-left:0"><div class="a" style="left:0;top:0;width:104px;text-align:center">0</div><div class="sp"><div class="a" style="left:0;top:15px;width:33px;height:1px;background:#2d3241"></div><svg class="a" style="left:10.5px;top:6px" width="10" height="6" viewBox="0 0 10 6"><path d="M1 5 L5 1 L9 5" fill="none" stroke="#e6e8ee" stroke-width="1.3"/></svg><svg class="a" style="left:10.5px;top:20px" width="10" height="6" viewBox="0 0 10 6"><path d="M1 1 L5 5 L9 1" fill="none" stroke="#e6e8ee" stroke-width="1.3"/></svg></div></div>
<div class="lb" style="right:707px;top:599px">声音文件</div>
<div class="inp" style="left:1225px;top:593px;width:441px"></div>
<div class="lb" style="right:1308px;top:643px">通讯故障处理意见<svg class="qm" viewBox="0 0 16 16"><circle cx="8" cy="8" r="7.2" fill="none" stroke="#fff" stroke-width="1.3"/><path d="M5.9 6.2 Q5.9 4.2 8 4.2 Q10.1 4.2 10.1 6 Q10.1 7.1 9 7.6 Q8 8.1 8 9.3" fill="none" stroke="#fff" stroke-width="1.5"/><circle cx="8" cy="11.6" r="0.95" fill="#fff"/></svg></div>
<div class="inp" style="left:624px;top:637px;width:441px"></div>
<div class="lb" style="right:707px;top:643px">资产名称<svg class="qm" viewBox="0 0 16 16"><circle cx="8" cy="8" r="7.2" fill="none" stroke="#fff" stroke-width="1.3"/><path d="M5.9 6.2 Q5.9 4.2 8 4.2 Q10.1 4.2 10.1 6 Q10.1 7.1 9 7.6 Q8 8.1 8 9.3" fill="none" stroke="#fff" stroke-width="1.5"/><circle cx="8" cy="11.6" r="0.95" fill="#fff"/></svg></div>
<div class="inp" style="left:1225px;top:637px;width:141px;color:#8e919a">请选择</div>
<svg class="a" style="left:1344px;top:650px" width="12" height="8" viewBox="0 0 12 8"><path d="M1 1.2 L6 6.2 L11 1.2" fill="none" stroke="#e6e8ee" stroke-width="1.4"/></svg>
<div class="lb" style="right:406px;top:643px">预案号<svg class="qm" viewBox="0 0 16 16"><circle cx="8" cy="8" r="7.2" fill="none" stroke="#fff" stroke-width="1.3"/><path d="M5.9 6.2 Q5.9 4.2 8 4.2 Q10.1 4.2 10.1 6 Q10.1 7.1 9 7.6 Q8 8.1 8 9.3" fill="none" stroke="#fff" stroke-width="1.5"/><circle cx="8" cy="11.6" r="0.95" fill="#fff"/></svg></div>
<div class="inp" style="left:1526px;top:637px;width:140px;background:#2b303e;border-color:#464b5a;color:#a9acb4"></div>
<div class="lb" style="right:1308px;top:687px">关联页面</div>
<div class="inp" style="left:624px;top:681px;width:141px"></div>
<div class="lb" style="right:1008px;top:687px">报警级别</div>
<div class="inp" style="left:925px;top:681px;width:140px;color:#fff">3</div>
<svg class="a" style="left:1043px;top:694px" width="12" height="8" viewBox="0 0 12 8"><path d="M1 1.2 L6 6.2 L11 1.2" fill="none" stroke="#e6e8ee" stroke-width="1.4"/></svg>
<div class="lb" style="right:707px;top:687px">记录报警</div>
<div class="inp" style="left:1225px;top:681px;width:141px;color:#fff">否</div>
<svg class="a" style="left:1344px;top:694px" width="12" height="8" viewBox="0 0 12 8"><path d="M1 1.2 L6 6.2 L11 1.2" fill="none" stroke="#e6e8ee" stroke-width="1.4"/></svg>
<div class="lb" style="right:406px;top:687px"><span class="st">*</span>曲线记录阈值</div>
<div class="inp" style="left:1526px;top:681px;width:140px;padding-left:0"><div class="a" style="left:0;top:0;width:104px;text-align:center">0</div><div class="sp"><div class="a" style="left:0;top:15px;width:33px;height:1px;background:#2d3241"></div><svg class="a" style="left:10.5px;top:6px" width="10" height="6" viewBox="0 0 10 6"><path d="M1 5 L5 1 L9 5" fill="none" stroke="#e6e8ee" stroke-width="1.3"/></svg><svg class="a" style="left:10.5px;top:20px" width="10" height="6" viewBox="0 0 10 6"><path d="M1 1 L5 5 L9 1" fill="none" stroke="#e6e8ee" stroke-width="1.3"/></svg></div></div>
<div class="lb" style="right:1308px;top:731px">关联视频</div>
<div class="inp" style="left:624px;top:725px;width:141px;color:#8e919a">请选择</div>
<svg class="a" style="left:743px;top:738px" width="12" height="8" viewBox="0 0 12 8"><path d="M1 1.2 L6 6.2 L11 1.2" fill="none" stroke="#e6e8ee" stroke-width="1.4"/></svg>
<div class="lb" style="right:1008px;top:731px">报警升级周期(min)<svg class="qm" viewBox="0 0 16 16"><circle cx="8" cy="8" r="7.2" fill="none" stroke="#fff" stroke-width="1.3"/><path d="M5.9 6.2 Q5.9 4.2 8 4.2 Q10.1 4.2 10.1 6 Q10.1 7.1 9 7.6 Q8 8.1 8 9.3" fill="none" stroke="#fff" stroke-width="1.5"/><circle cx="8" cy="11.6" r="0.95" fill="#fff"/></svg></div>
<div class="inp" style="left:925px;top:725px;width:140px;padding-left:0"><div class="a" style="left:0;top:0;width:104px;text-align:center">0</div><div class="sp"><div class="a" style="left:0;top:15px;width:33px;height:1px;background:#2d3241"></div><svg class="a" style="left:10.5px;top:6px" width="10" height="6" viewBox="0 0 10 6"><path d="M1 5 L5 1 L9 5" fill="none" stroke="#e6e8ee" stroke-width="1.3"/></svg><svg class="a" style="left:10.5px;top:20px" width="10" height="6" viewBox="0 0 10 6"><path d="M1 1 L5 5 L9 1" fill="none" stroke="#e6e8ee" stroke-width="1.3"/></svg></div></div>
<div class="lb" style="right:707px;top:731px">报警屏蔽<svg class="qm" viewBox="0 0 16 16"><circle cx="8" cy="8" r="7.2" fill="none" stroke="#fff" stroke-width="1.3"/><path d="M5.9 6.2 Q5.9 4.2 8 4.2 Q10.1 4.2 10.1 6 Q10.1 7.1 9 7.6 Q8 8.1 8 9.3" fill="none" stroke="#fff" stroke-width="1.5"/><circle cx="8" cy="11.6" r="0.95" fill="#fff"/></svg></div>
<div class="inp" style="left:1225px;top:725px;width:141px"></div>
<div class="lb" style="right:406px;top:731px">安全时段<svg class="qm" viewBox="0 0 16 16"><circle cx="8" cy="8" r="7.2" fill="none" stroke="#fff" stroke-width="1.3"/><path d="M5.9 6.2 Q5.9 4.2 8 4.2 Q10.1 4.2 10.1 6 Q10.1 7.1 9 7.6 Q8 8.1 8 9.3" fill="none" stroke="#fff" stroke-width="1.5"/><circle cx="8" cy="11.6" r="0.95" fill="#fff"/></svg></div>
<div class="inp" style="left:1526px;top:725px;width:140px"></div>
<div class="lb" style="right:1308px;top:775px"><span class="st">*</span>重复报警时间(min)</div>
<div class="inp" style="left:624px;top:769px;width:141px;padding-left:0"><div class="a" style="left:0;top:0;width:105px;text-align:center">0</div><div class="sp"><div class="a" style="left:0;top:15px;width:33px;height:1px;background:#2d3241"></div><svg class="a" style="left:10.5px;top:6px" width="10" height="6" viewBox="0 0 10 6"><path d="M1 5 L5 1 L9 5" fill="none" stroke="#e6e8ee" stroke-width="1.3"/></svg><svg class="a" style="left:10.5px;top:20px" width="10" height="6" viewBox="0 0 10 6"><path d="M1 1 L5 5 L9 1" fill="none" stroke="#e6e8ee" stroke-width="1.3"/></svg></div></div>
<div class="lb" style="right:1008px;top:775px">预留字段1</div>
<div class="inp" style="left:925px;top:769px;width:140px"></div>
<div class="lb" style="right:707px;top:775px">预留字段2</div>
<div class="inp" style="left:1225px;top:769px;width:141px"></div>
<div class="lb" style="right:406px;top:775px">预留字段3</div>
<div class="inp" style="left:1526px;top:769px;width:140px"></div>
<div class="a" style="left:1472px;top:829px;width:91px;height:32px;border:1px solid #3b74f4;border-radius:2px;background:#151b2c;color:#3b74f4;font-size:14px;text-align:center;line-height:30px">取消</div>
<div class="a" style="left:1570px;top:829px;width:100px;height:38px;border:3px solid #f01c1c;border-radius:3px"></div>
<div class="a" style="left:1574px;top:832px;width:92px;height:28px;background:#3b74f4;border-radius:2px;color:#fff;font-size:14px;text-align:center;line-height:28px">确认</div>
<svg class="a" style="left:1740px;top:929px" width="180" height="32" viewBox="0 0 180 32">
<path d="M27 6 H176 Q180 6 180 10 V32 H27 Z" fill="#fff"/>
<g transform="rotate(-16 17.5 18)"><rect x="4.5" y="4.5" width="26" height="27" rx="5" fill="#f25a1f"/></g>
<path d="M24 11.5 Q14 8.5 9.5 13.5 Q8 18.5 15.5 19 Q21 19.5 20.5 22 Q19 25 10 24" fill="none" stroke="#fff" stroke-width="3.4" stroke-linecap="round"/>
<g fill="none" stroke="#1570dc" stroke-width="2">
<rect x="41" y="15.5" width="12" height="7.5" rx="1"/><path d="M47 11.5 V26.5"/>
<circle cx="68" cy="17" r="1.6" stroke-width="1.4"/>
<path d="M76 19.5 Q76.5 24 73.5 26" stroke-width="2.4"/>
<path d="M90 20 Q90 25 95 25 Q100 25 100 20 M95 25 V27.5 M92 27.5 H98"/>
<rect x="113" y="14" width="13.5" height="11" rx="2"/>
</g>
<rect x="92.5" y="11" width="5" height="11" rx="2.5" fill="#1570dc"/>
<path d="M116 17.5h1.6M119 17.5h1.6M122 17.5h1.6M116 20.5h1.6M119 20.5h1.6M122 20.5h1.6M117 23h6" stroke="#1570dc" stroke-width="1.4"/>
<defs><linearGradient id="sh" x1="0" y1="0" x2="1" y2="1"><stop offset="0" stop-color="#a070f0"/><stop offset="1" stop-color="#5a66e0"/></linearGradient></defs>
<path d="M136 14 L141 11.5 Q143.5 13.5 146 11.5 L151 14 L150 18.5 L147.5 18 V26.5 H139.5 V18 L137 18.5 Z" fill="url(#sh)"/>
<rect x="161" y="12" width="6" height="6" rx="1.6" fill="#1570dc"/><rect x="168.5" y="12" width="6" height="6" rx="1.6" fill="#1570dc"/>
<rect x="161" y="19.5" width="6" height="6" rx="1.6" fill="#1570dc"/><rect x="168.5" y="19.5" width="6" height="6" rx="1.6" fill="#1570dc"/>
<rect x="170.5" y="14" width="2" height="2" fill="#fff"/>
</svg>
</body></html>
